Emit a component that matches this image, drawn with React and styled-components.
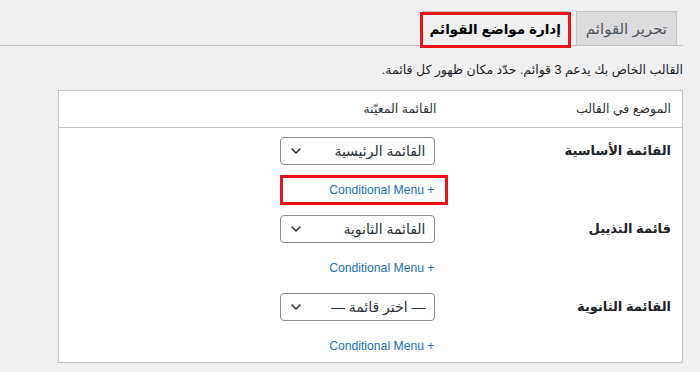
import React from "react";
import styled, { createGlobalStyle } from "styled-components";

const Global = createGlobalStyle`
  html, body { margin: 0; padding: 0; background: #f0f0f1; }
  body { font-family: "Liberation Sans", "DejaVu Sans", sans-serif; color: #3c434a; }
  * { box-sizing: border-box; }
`;

const Page = styled.div`
  direction: rtl;
  width: 700px;
  height: 372px;
  padding: 0 17px 0 0;
  overflow: hidden;
`;

const TabBar = styled.div`
  display: flex;
  align-items: flex-end;
  gap: 7px;
  padding: 11px 6px 0 0;
  border-bottom: 1px solid #c3c4c7;
  height: 46px;
`;

const Tab = styled.div`
  position: relative;
  height: 35px;
  margin-bottom: -1px;
  padding: 0 ${(p) => (p.$active ? 7 : 9)}px;
  display: flex;
  align-items: center;
  font-size: ${(p) => (p.$active ? 13.5 : 15)}px;
  font-weight: ${(p) => (p.$active ? 700 : 400)};
  color: ${(p) => (p.$active ? "#000" : "#50575e")};
  background: ${(p) => (p.$active ? "#f0f0f1" : "#dcdcde")};
  border: 1px solid #c3c4c7;
  border-bottom-color: ${(p) => (p.$active ? "#f0f0f1" : "#c3c4c7")};
  white-space: nowrap;
`;

const Highlight = styled.span`
  position: absolute;
  top: 0;
  right: -3px;
  left: -3px;
  bottom: -3px;
  border: 3px solid #e8141c;
  pointer-events: none;
`;

const Intro = styled.p`
  margin: 14px 0 10px;
  font-size: 12.5px;
  line-height: 20px;
  color: #1d2327;
`;

const Table = styled.table`
  width: 625px;
  border-collapse: collapse;
  background: #fff;
  border: 1px solid #c3c4c7;
  table-layout: fixed;
`;

const HeadCell = styled.th`
  text-align: right;
  font-weight: 400;
  font-size: 12.5px;
  line-height: 20px;
  color: #2c3338;
  padding: 8px ${(p) => p.$pr}px 8px 10px;
  border-bottom: 1px solid #c3c4c7;
  width: ${(p) => (p.$w ? p.$w + "px" : "auto")};
`;

const LabelCell = styled.th`
  text-align: right;
  vertical-align: top;
  padding: 13px 11px 0 10px;
  font-size: 13px;
  line-height: 20px;
  font-weight: 700;
  color: #1d2327;
`;

const FieldCell = styled.td`
  vertical-align: top;
  padding: 9px 12px 6px 10px;
`;

const Select = styled.div`
  width: 155px;
  height: 28px;
  border: 1px solid #8c8f94;
  border-radius: 4px;
  background: #fff;
  display: flex;
  align-items: center;
  justify-content: space-between;
  padding: 0 8px 0 9px;
  font-size: 14px;
  color: #2c3338;
  white-space: nowrap;
`;

const Chevron = styled.svg`
  width: 12px;
  height: 12px;
  flex: none;
`;

const LinkLine = styled.div`
  position: relative;
  width: 155px;
  margin-top: 15px;
  font-size: 12.2px;
  line-height: 20px;
`;

const AddLink = styled.a`
  color: #2271b1;
  text-decoration: none;
`;

const LinkHighlight = styled.span`
  position: absolute;
  top: -5px;
  bottom: -5px;
  left: 0;
  right: -13px;
  border: 3px solid #e8141c;
  pointer-events: none;
`;

const rows = [
  { label: "القائمة الأساسية", value: "القائمة الرئيسية", mark: true },
  { label: "قائمة التذييل", value: "القائمة الثانوية" },
  { label: "القائمة الثانوية", value: "— اختر قائمة —" },
];

function ChevronIcon() {
  return (
    <Chevron viewBox="0 0 12 12" fill="none">
      <path d="M2 4 L6 8 L10 4" stroke="#2c3338" strokeWidth="1.6" strokeLinecap="round" strokeLinejoin="round" />
    </Chevron>
  );
}

export default function App() {
  return (
    <>
      <Global />
      <Page>
        <TabBar>
          <Tab>تحرير القوائم</Tab>
          <Tab $active>
            إدارة مواضع القوائم
            <Highlight />
          </Tab>
        </TabBar>
        <Intro>القالب الخاص بك يدعم 3 قوائم. حدّد مكان ظهور كل قائمة.</Intro>
        <Table>
          <thead>
            <tr>
              <HeadCell $w={236} $pr={11}>الموضع في القالب</HeadCell>
              <HeadCell $pr={10}>القائمة المعيّنة</HeadCell>
            </tr>
          </thead>
          <tbody>
            {rows.map((r) => (
              <tr key={r.label}>
                <LabelCell>{r.label}</LabelCell>
                <FieldCell>
                  <Select>
                    <span>{r.value}</span>
                    <ChevronIcon />
                  </Select>
                  <LinkLine>
                    <AddLink href="#">+ Conditional Menu</AddLink>
                    {r.mark && <LinkHighlight />}
                  </LinkLine>
                </FieldCell>
              </tr>
            ))}
          </tbody>
        </Table>
      </Page>
    </>
  );
}
